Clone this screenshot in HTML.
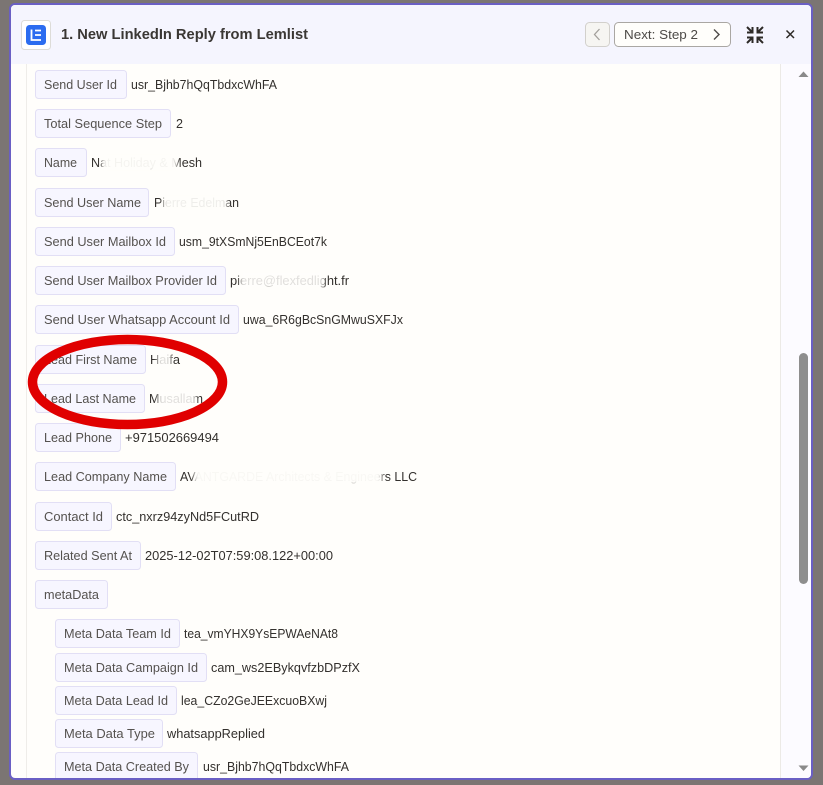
<!DOCTYPE html>
<html><head><meta charset="utf-8"><title>New LinkedIn Reply from Lemlist</title>
<style>
html,body{margin:0;padding:0;width:823px;height:785px;overflow:hidden;background:#7b7573}
svg{display:block}
text{font-family:"Liberation Sans",sans-serif;font-size:12.5px;dominant-baseline:auto}
.b{fill:#f7f6ff;stroke:#e2dff5;stroke-width:1}
.l{fill:#55524f}
.v{fill:#33302d}
</style></head><body>
<svg width="823" height="785" viewBox="0 0 823 785" xmlns="http://www.w3.org/2000/svg">
<defs>
<filter id="bl" x="-20%" y="-50%" width="140%" height="200%"><feGaussianBlur stdDeviation="2"/></filter>
<clipPath id="modal"><rect x="11" y="5" width="800" height="773" rx="4"/></clipPath>
</defs>
<rect x="10" y="4" width="802" height="775" rx="5" fill="#fffefb" stroke="#6a5fc4" stroke-width="2"/>
<g clip-path="url(#modal)">
<rect x="11" y="5" width="800" height="59" fill="#f5f5fe"/>
<rect x="781" y="64" width="30" height="715" fill="#fcfbff"/>
<rect x="26" y="64" width="1" height="715" fill="#efede9"/>
<rect x="780" y="64" width="1" height="715" fill="#ecEAe6"/>

<rect class="b" x="35.500" y="70.500" width="91" height="28" rx="3"/><text class="l" x="44" y="89" textLength="73" lengthAdjust="spacingAndGlyphs">Send User Id</text><text class="v" x="131" y="89" textLength="146" lengthAdjust="spacingAndGlyphs">usr_Bjhb7hQqTbdxcWhFA</text>
<rect class="b" x="35.500" y="109.500" width="135" height="28" rx="3"/><text class="l" x="44" y="128" textLength="118" lengthAdjust="spacingAndGlyphs">Total Sequence Step</text><text class="v" x="176" y="128" textLength="7" lengthAdjust="spacingAndGlyphs">2</text>
<rect class="b" x="35.500" y="148.500" width="51" height="28" rx="3"/><text class="l" x="44" y="167" textLength="33" lengthAdjust="spacingAndGlyphs">Name</text><text class="v" x="91" y="167" textLength="111" lengthAdjust="spacingAndGlyphs">Nat Holiday &amp; Mesh</text>
<rect class="b" x="35.500" y="188.500" width="113" height="28" rx="3"/><text class="l" x="44" y="207" textLength="97" lengthAdjust="spacingAndGlyphs">Send User Name</text><text class="v" x="154" y="207" textLength="85" lengthAdjust="spacingAndGlyphs">Pierre Edelman</text>
<rect class="b" x="35.500" y="227.500" width="139" height="28" rx="3"/><text class="l" x="44" y="246" textLength="122" lengthAdjust="spacingAndGlyphs">Send User Mailbox Id</text><text class="v" x="179" y="246" textLength="148" lengthAdjust="spacingAndGlyphs">usm_9tXSmNj5EnBCEot7k</text>
<rect class="b" x="35.500" y="266.500" width="190" height="28" rx="3"/><text class="l" x="44" y="285" textLength="173" lengthAdjust="spacingAndGlyphs">Send User Mailbox Provider Id</text><text class="v" x="230" y="285" textLength="119" lengthAdjust="spacingAndGlyphs">pierre@flexfedlight.fr</text>
<rect class="b" x="35.500" y="305.500" width="203" height="28" rx="3"/><text class="l" x="44" y="324" textLength="186" lengthAdjust="spacingAndGlyphs">Send User Whatsapp Account Id</text><text class="v" x="243" y="324" textLength="160" lengthAdjust="spacingAndGlyphs">uwa_6R6gBcSnGMwuSXFJx</text>
<rect class="b" x="35.500" y="345.500" width="110" height="28" rx="3"/><text class="l" x="44" y="364" textLength="93" lengthAdjust="spacingAndGlyphs">Lead First Name</text><text class="v" x="150" y="364" textLength="30" lengthAdjust="spacingAndGlyphs">Haifa</text>
<rect class="b" x="35.500" y="384.500" width="109" height="28" rx="3"/><text class="l" x="44" y="403" textLength="92" lengthAdjust="spacingAndGlyphs">Lead Last Name</text><text class="v" x="149" y="403" textLength="54" lengthAdjust="spacingAndGlyphs">Musallam</text>
<rect class="b" x="35.500" y="423.500" width="85" height="28" rx="3"/><text class="l" x="44" y="442" textLength="68" lengthAdjust="spacingAndGlyphs">Lead Phone</text><text class="v" x="125" y="442" textLength="94" lengthAdjust="spacingAndGlyphs">+971502669494</text>
<rect class="b" x="35.500" y="462.500" width="140" height="28" rx="3"/><text class="l" x="44" y="481" textLength="123" lengthAdjust="spacingAndGlyphs">Lead Company Name</text><text class="v" x="180" y="481" textLength="237" lengthAdjust="spacingAndGlyphs">AVANTGARDE Architects &amp; Engineers LLC</text>
<rect class="b" x="35.500" y="502.500" width="76" height="28" rx="3"/><text class="l" x="44" y="521" textLength="59" lengthAdjust="spacingAndGlyphs">Contact Id</text><text class="v" x="116" y="521" textLength="143" lengthAdjust="spacingAndGlyphs">ctc_nxrz94zyNd5FCutRD</text>
<rect class="b" x="35.500" y="541.500" width="105" height="28" rx="3"/><text class="l" x="44" y="560" textLength="88" lengthAdjust="spacingAndGlyphs">Related Sent At</text><text class="v" x="145" y="560" textLength="188" lengthAdjust="spacingAndGlyphs">2025-12-02T07:59:08.122+00:00</text>
<rect class="b" x="35.500" y="580.500" width="72" height="28" rx="3"/><text class="l" x="44" y="599" textLength="55" lengthAdjust="spacingAndGlyphs">metaData</text>
<rect class="b" x="55.500" y="619.500" width="124" height="28" rx="3"/><text class="l" x="64" y="638" textLength="107" lengthAdjust="spacingAndGlyphs">Meta Data Team Id</text><text class="v" x="184" y="638" textLength="154" lengthAdjust="spacingAndGlyphs">tea_vmYHX9YsEPWAeNAt8</text>
<rect class="b" x="55.500" y="653.500" width="151" height="28" rx="3"/><text class="l" x="64" y="672" textLength="134" lengthAdjust="spacingAndGlyphs">Meta Data Campaign Id</text><text class="v" x="211" y="672" textLength="149" lengthAdjust="spacingAndGlyphs">cam_ws2EBykqvfzbDPzfX</text>
<rect class="b" x="55.500" y="686.500" width="121" height="28" rx="3"/><text class="l" x="64" y="705" textLength="104" lengthAdjust="spacingAndGlyphs">Meta Data Lead Id</text><text class="v" x="181" y="705" textLength="146" lengthAdjust="spacingAndGlyphs">lea_CZo2GeJEExcuoBXwj</text>
<rect class="b" x="55.500" y="719.500" width="107" height="28" rx="3"/><text class="l" x="64" y="738" textLength="91" lengthAdjust="spacingAndGlyphs">Meta Data Type</text><text class="v" x="167" y="738" textLength="98" lengthAdjust="spacingAndGlyphs">whatsappReplied</text>
<rect class="b" x="55.500" y="752.500" width="142" height="28" rx="3"/><text class="l" x="64" y="771" textLength="125" lengthAdjust="spacingAndGlyphs">Meta Data Created By</text><text class="v" x="203" y="771" textLength="146" lengthAdjust="spacingAndGlyphs">usr_Bjhb7hQqTbdxcWhFA</text>

<!-- redaction smudges -->
<g fill="#fffefb" filter="url(#bl)">
<rect x="102" y="153" width="75" height="19" opacity=".95"/>
<rect x="163" y="192" width="64" height="19" opacity=".92"/>
<rect x="240" y="270" width="84" height="19" opacity=".85"/>
<rect x="157" y="350" width="14" height="19" opacity=".85"/>
<rect x="158" y="389" width="38" height="19" opacity=".85"/>
<rect x="194" y="466" width="188" height="19" opacity=".97"/>
</g>

<!-- scrollbar -->
<rect x="799" y="353" width="9" height="231" rx="4.500" fill="#8e8e8e"/>
<path d="M798.500 77l5-5.500 5 5.500z" fill="#8a8a8a"/>
<path d="M798.500 765.500l5 5.500 5-5.500z" fill="#8a8a8a"/>
</g>

<!-- header -->
<rect x="21.500" y="20.500" width="29" height="29" rx="3" fill="#fff" stroke="#dddcd8"/>
<rect x="26" y="25" width="20" height="20" rx="3.500" fill="#2b6cf0"/>
<path d="M31.500 29.500v10.500h9.500M35 30.500h6M35 35h6" fill="none" stroke="#fff" stroke-width="1.800"/>
<text x="61" y="39" textLength="247" lengthAdjust="spacingAndGlyphs" style="font-size:15px;font-weight:700;fill:#3a3734">1. New LinkedIn Reply from Lemlist</text>

<rect x="585.500" y="22.500" width="24" height="24" rx="4" fill="#f6f5f2" stroke="#d2d0cc"/>
<path d="M599.500 29l-5 5.500 5 5.500" fill="none" stroke="#a3a09c" stroke-width="1.300"/>
<rect x="614.500" y="22.500" width="116" height="24" rx="4" fill="#fffefb" stroke="#aaa7a3"/>
<text x="624" y="39" textLength="74" lengthAdjust="spacingAndGlyphs" style="font-size:13px;fill:#4d4a47">Next: Step 2</text>
<path d="M714 29.500l5 5-5 5" fill="none" stroke="#4d4a47" stroke-width="1.400"/>

<g fill="none" stroke="#2d2a27" stroke-width="2">
<path d="M747 27l5.500 5.500M752.500 27v5.500h-5.500"/>
<path d="M763 27l-5.500 5.500M757.500 27v5.500h5.500"/>
<path d="M747 43l5.500-5.500M752.500 43v-5.500h-5.500"/>
<path d="M763 43l-5.500-5.500M757.500 43v-5.500h5.500"/>
</g>
<path d="M786.500 30.500l7.500 7.500M794 30.500l-7.500 7.500" fill="none" stroke="#2d2a27" stroke-width="1.500"/>

<!-- annotation -->
<ellipse cx="127.500" cy="382" rx="95" ry="42.500" fill="none" stroke="#e00000" stroke-width="9.500"/>
</svg>
</body></html>
